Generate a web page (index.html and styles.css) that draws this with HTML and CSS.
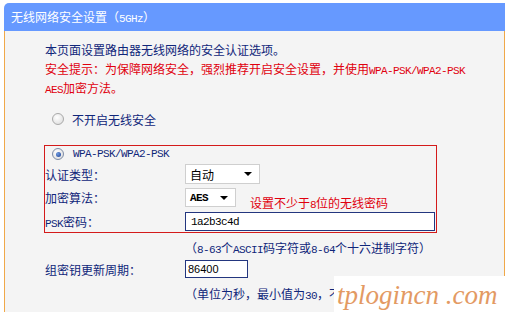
FILE: index.html
```html
<!DOCTYPE html>
<html lang="zh-CN">
<head>
  <meta charset="UTF-8" />
  <title>无线网络安全设置</title>
  <link rel="stylesheet" href="styles.css">
</head>
<body>

<div class="page">
  <div class="head">无线网络安全设置（<span class="en">5GHz</span>）</div>

  <div class="panel">
    <p class="intro">本页面设置路由器无线网络的安全认证选项。</p>
    <p class="warn">安全提示：为保障网络安全，强烈推荐开启安全设置，并使用<span class="en">WPA-PSK/WPA2-PSK</span><br><span class="en">AES</span>加密方法。</p>

    <div class="opt"><span class="radio"></span>不开启无线安全</div>

    <div class="secbox">
      <div class="opt opt-in"><span class="radio on"></span><span class="en">WPA-PSK/WPA2-PSK</span></div>

      <div class="row row-auth">
        <span class="lbl">认证类型：</span>
        <div class="sel sel-auth">自动<i class="arrow"></i></div>
      </div>

      <div class="row row-enc">
        <span class="lbl">加密算法：</span>
        <div class="sel sel-enc"><span class="en">AES</span><i class="arrow"></i></div>
        <span class="tip">设置不少于<span class="en">8</span>位的无线密码</span>
      </div>

      <div class="row row-psk">
        <span class="lbl"><span class="en">PSK</span>密码：</span>
        <div class="field field-psk"><span class="en">1a2b3c4d</span></div>
      </div>
    </div>

    <div class="row row-hint">
      <span class="lbl"></span>
      <span class="hint">（<span class="en">8-63</span>个<span class="en">ASCII</span>码字符或<span class="en">8-64</span>个十六进制字符）</span>
    </div>

    <div class="row row-group">
      <span class="lbl">组密钥更新周期：</span>
      <div class="field field-group"><span class="en">86400</span></div>
    </div>

    <div class="row row-hint2">
      <span class="lbl"></span>
      <span class="hint">（单位为秒，最小值为<span class="en">30</span>，不更新则为<span class="en">0</span>）</span>
    </div>
  </div>
</div>

<!-- watermark over the corner -->
<div class="mark">tplogincn .com</div>

</body>
</html>
```

FILE: styles.css
```css
:root {
  --head-blue: #6699ff;
  --panel-bg: #f4f4f4;
  --edge: #f0a848;
  --navy: #10267a;
  --red: #e0000e;
}

body {
  margin: 0;
  background: #ffffff;
  font-family: "Noto Sans CJK SC", "Noto Sans", sans-serif;
  font-size: 12px;
  color: var(--navy);
  position: relative;
  width: 509px;
  height: 317px;
  overflow: hidden;
}

/* ascii runs are half-width, like the old bitmap font */
.en {
  font-family: "Liberation Mono", monospace;
  font-size: 11px;
  letter-spacing: -0.6px;
  line-height: 10px;
}

.page {
  padding: 3px 4px 0 4px;
  width: 501px;
}

.head {
  height: 28px;
  line-height: 28px;
  background: var(--head-blue);
  border-top-left-radius: 5px;
  color: #ffffff;
  padding-left: 7px;
}

.panel {
  background: var(--panel-bg);
  border-left: 1px solid var(--edge);
  border-right: 1px solid var(--edge);
  padding: 9px 0 10px 40px;
}

.intro,
.warn {
  margin: 0;
  line-height: 19px;
}

.warn {
  color: var(--red);
}

.opt {
  display: flex;
  align-items: center;
  height: 18px;
  margin-top: 13px;
  padding-left: 7px;
  gap: 8px;
  color: var(--navy);
}

.opt-in {
  margin-top: 0;
  height: 16px;
  gap: 9px;
}

.radio {
  width: 10px;
  height: 10px;
  border-radius: 50%;
  border: 1px solid #a9a9a9;
  background: radial-gradient(circle at 40% 35%, #ffffff 0%, #e4e4e4 70%, #cfcfcf 100%);
  display: flex;
  align-items: center;
  justify-content: center;
}

.radio.on {
  border-color: #7d8ca6;
}

.radio.on::after {
  content: "";
  width: 5px;
  height: 5px;
  border-radius: 50%;
  background: radial-gradient(circle at 35% 35%, #6f9be0, #1b3f92);
}

.secbox {
  margin-top: 17px;
  margin-left: -1px;
  width: 391px;
  border: 1px solid #d41a1a;
}

.row {
  display: flex;
  align-items: center;
}

.lbl {
  width: 140px;
  flex: none;
}

.row-auth {
  margin-top: 2px;
  height: 20px;
}

.row-enc {
  margin-top: 4px;
  height: 24px;
  align-items: flex-start;
}

.row-enc .lbl,
.row-psk .lbl {
  line-height: 20px;
}

.row-psk {
  height: 20px;
  align-items: flex-start;
}

.sel {
  box-sizing: border-box;
  height: 20px;
  background: #ffffff;
  border: 1px solid #cfcfcf;
  color: #000000;
  display: flex;
  align-items: center;
  padding-left: 4px;
}

.sel-auth {
  width: 75px;
}

.sel-enc {
  width: 51px;
  height: 19px;
}

.sel .en {
  font-weight: bold;
}

.arrow {
  margin-left: auto;
  margin-right: 7px;
  width: 0;
  height: 0;
  border-left: 4px solid transparent;
  border-right: 4px solid transparent;
  border-top: 4px solid #000000;
}

.tip {
  color: var(--red);
  margin-left: 14px;
  align-self: flex-end;
  line-height: 14px;
  margin-bottom: 2px;
}

.field {
  box-sizing: border-box;
  height: 19px;
  background: #ffffff;
  border: 1px solid #23367f;
  color: #000000;
  display: flex;
  align-items: center;
  padding-left: 5px;
}

.field-psk {
  width: 250px;
}

.field-group {
  width: 63px;
  height: 18px;
  padding-left: 2px;
}

.field-group .en {
  font-family: "Liberation Sans", sans-serif;
  font-size: 11px;
  letter-spacing: 0;
}

.row-hint {
  margin-top: 5px;
  height: 18px;
}

.row-group {
  margin-top: 4px;
  height: 18px;
}

.row-hint2 {
  margin-top: 6px;
  height: 18px;
}

.mark {
  position: absolute;
  left: 334px;
  top: 276px;
  width: 175px;
  height: 41px;
  background: #ffffff;
  color: #e39a63;
  font-family: "Liberation Serif", serif;
  font-style: italic;
  font-size: 27px;
  line-height: 38px;
  padding-left: 3px;
  white-space: nowrap;
  overflow: hidden;
  box-sizing: border-box;
}
```
